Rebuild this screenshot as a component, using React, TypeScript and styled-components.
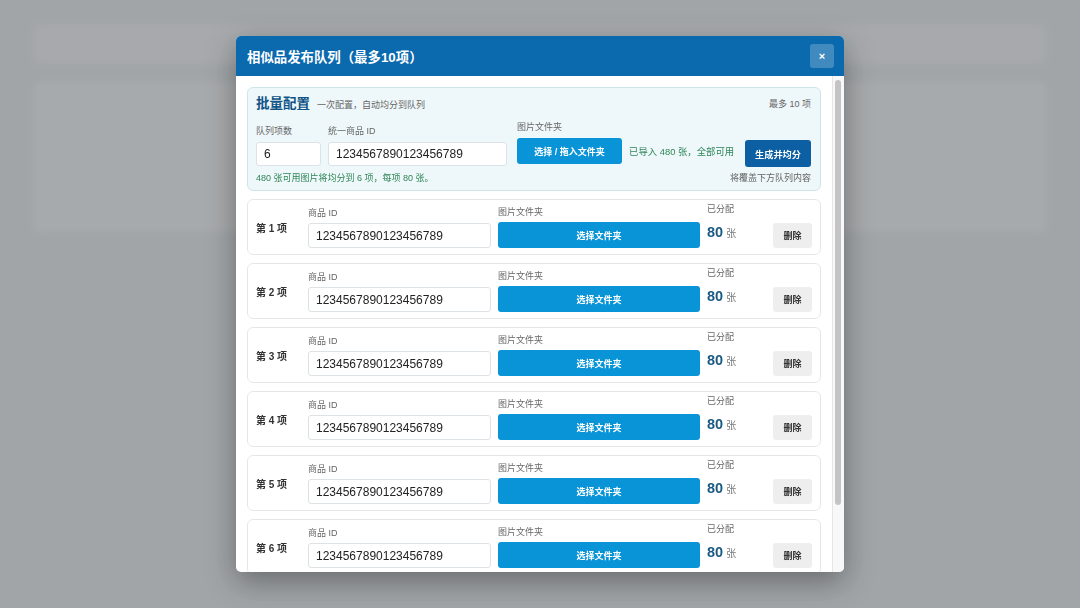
import React from "react";
import styled, { createGlobalStyle } from "styled-components";

const GlobalStyle = createGlobalStyle`
  html, body {
    margin: 0;
    padding: 0;
  }
  body {
    font-family: "Helvetica Neue", "Liberation Sans", "Noto Sans CJK SC", sans-serif;
    color: #333;
  }
  * {
    box-sizing: border-box;
  }
`;

const Page = styled.div`
  width: 1080px;
  height: 608px;
  background: #eceff1;
  padding: 24px 34px;
  position: relative;
  overflow: hidden;
`;

const TopBar = styled.div`
  height: 40px;
  border-radius: 6px;
  background: #f6f7f8;
`;

const BackPanel = styled.div`
  margin-top: 18px;
  height: 150px;
  border-radius: 6px;
  background: #f7f8f8;
`;

const Overlay = styled.div`
  position: absolute;
  inset: 0;
  background: rgba(62, 68, 72, 0.43);
  backdrop-filter: blur(3px);
  display: flex;
  align-items: center;
  justify-content: center;
`;

const Modal = styled.div`
  width: 608px;
  height: 536px;
  background: #fff;
  border-radius: 5px;
  box-shadow: 0 10px 30px rgba(0, 0, 0, 0.35);
  display: flex;
  flex-direction: column;
  overflow: hidden;
`;

const Header = styled.div`
  height: 40px;
  flex: none;
  background: #0b69ae;
  display: flex;
  align-items: center;
  justify-content: space-between;
  padding: 0 10px 0 11px;
`;

const Title = styled.h2`
  margin: 0;
  font-size: 13.4px;
  font-weight: 700;
  color: #fff;
`;

const CloseButton = styled.button`
  width: 24px;
  height: 24px;
  border: none;
  border-radius: 3px;
  background: rgba(255, 255, 255, 0.22);
  color: #fff;
  font-size: 11px;
  font-weight: 700;
  line-height: 1;
  padding: 0;
  font-family: inherit;
`;

const Body = styled.div`
  flex: 1;
  min-height: 0;
  display: flex;
`;

const Content = styled.div`
  flex: 1;
  overflow: hidden;
  padding: 11px 11px 0 11px;
  display: flex;
  flex-direction: column;
  gap: 8px;
`;

const ScrollTrack = styled.div`
  width: 12px;
  flex: none;
  background: #f8f8f8;
  border-left: 1px solid #e6e6e6;
  padding: 4px 3px 0 2px;
`;

const ScrollThumb = styled.div`
  height: 425px;
  border-radius: 3px;
  background: #c4c4c4;
`;

const BatchPanel = styled.section`
  flex: none;
  background: #eef7fa;
  border: 1px solid #cfe3ea;
  border-radius: 6px;
  padding: 8px 9px 6px 8px;
`;

const PanelHead = styled.div`
  display: flex;
  align-items: center;
  justify-content: space-between;
  height: 16px;
`;

const PanelTitle = styled.div`
  display: flex;
  align-items: baseline;
  gap: 7px;
`;

const BatchHeading = styled.span`
  font-size: 13.5px;
  line-height: 16px;
  font-weight: 700;
  color: #0f5486;
`;

const Hint = styled.span<{ $tone?: "muted" | "green" }>`
  font-size: 9px;
  line-height: 11px;
  color: ${(p) => (p.$tone === "green" ? "#2f8656" : "#666")};
  white-space: nowrap;
`;

const FieldsRow = styled.div`
  display: flex;
  align-items: flex-end;
  margin-top: 10px;
`;

const Field = styled.label<{ $w: number; $gap?: number }>`
  display: flex;
  flex-direction: column;
  width: ${(p) => p.$w}px;
  margin-right: ${(p) => p.$gap ?? 7}px;
`;

const FieldLabel = styled.span<{ $mb?: number }>`
  font-size: 9px;
  line-height: 11px;
  color: #666;
  margin-bottom: ${(p) => p.$mb ?? 5}px;
  white-space: nowrap;
`;

const TextInput = styled.input<{ $h?: number }>`
  height: ${(p) => p.$h ?? 24}px;
  width: 100%;
  border: 1px solid #dde2e6;
  border-radius: 3px;
  background: #fff;
  font-family: "Helvetica Neue", "Liberation Sans", sans-serif;
  font-size: 12px;
  color: #222;
  padding: 0 7px;
  outline: none;
`;

const FolderButton = styled.button<{ $h?: number; $mb?: number }>`
  height: ${(p) => p.$h ?? 26}px;
  width: 100%;
  margin-bottom: ${(p) => p.$mb ?? 0}px;
  border: none;
  border-radius: 3px;
  background: #0a94d8;
  color: #fff;
  font-family: inherit;
  font-size: 9px;
  font-weight: 700;
`;

const Status = styled.span`
  flex: 1;
  font-size: 9.4px;
  line-height: 11px;
  color: #2f8656;
  margin-bottom: 9px;
  white-space: nowrap;
`;

const GenerateButton = styled.button`
  width: 66px;
  height: 27px;
  margin-bottom: -1px;
  border: none;
  border-radius: 3px;
  background: #0b5fa2;
  color: #fff;
  font-family: inherit;
  font-size: 9.2px;
  font-weight: 700;
`;

const FootRow = styled.div`
  display: flex;
  justify-content: space-between;
  margin-top: 7px;
`;

const ItemRow = styled.div`
  flex: none;
  height: 56px;
  border: 1px solid #e4e7ea;
  border-radius: 6px;
  background: #fff;
  padding: 7px 8px 6px 8px;
  display: grid;
  grid-template-columns: 45px 183px 202px 1fr 39px;
  column-gap: 7px;
  align-items: end;
`;

const ItemName = styled.div`
  align-self: center;
  font-size: 10px;
  font-weight: 700;
  color: #333;
`;

const Col = styled.div`
  display: flex;
  flex-direction: column;
`;

const Alloc = styled.div`
  align-self: start;
  margin-top: -3px;
  display: flex;
  flex-direction: column;
`;

const AllocValue = styled.div`
  margin-top: 4px;
  line-height: 16px;
  display: flex;
  align-items: baseline;
  gap: 3px;
  b {
    font-size: 14.5px;
    font-weight: 700;
    color: #1b5a86;
  }
  span {
    font-size: 10px;
    color: #777;
  }
`;

const DeleteButton = styled.button`
  height: 25px;
  width: 39px;
  border: none;
  border-radius: 3px;
  background: #eeeeee;
  color: #333;
  font-family: inherit;
  font-size: 9px;
  font-weight: 700;
  padding: 0;
`;

const items = [1, 2, 3, 4, 5, 6];
const productId = "1234567890123456789";

const App = () => {
  return (
    <>
      <GlobalStyle />
      <Page>
        <TopBar />
        <BackPanel />
        <Overlay>
          <Modal>
            <Header>
              <Title>相似品发布队列（最多10项）</Title>
              <CloseButton>×</CloseButton>
            </Header>
            <Body>
              <Content>
                <BatchPanel>
                  <PanelHead>
                    <PanelTitle>
                      <BatchHeading>批量配置</BatchHeading>
                      <Hint>一次配置，自动均分到队列</Hint>
                    </PanelTitle>
                    <Hint>最多 10 项</Hint>
                  </PanelHead>
                  <FieldsRow>
                    <Field $w={65}>
                      <FieldLabel>队列项数</FieldLabel>
                      <TextInput defaultValue="6" />
                    </Field>
                    <Field $w={179} $gap={10}>
                      <FieldLabel>统一商品 ID</FieldLabel>
                      <TextInput defaultValue={productId} />
                    </Field>
                    <Field $w={105}>
                      <FieldLabel>图片文件夹</FieldLabel>
                      <FolderButton $mb={2}>选择 / 拖入文件夹</FolderButton>
                    </Field>
                    <Status>已导入 480 张，全部可用</Status>
                    <GenerateButton>生成并均分</GenerateButton>
                  </FieldsRow>
                  <FootRow>
                    <Hint $tone="green">480 张可用图片将均分到 6 项，每项 80 张。</Hint>
                    <Hint>将覆盖下方队列内容</Hint>
                  </FootRow>
                </BatchPanel>

                {items.map((n) => (
                  <ItemRow key={n}>
                    <ItemName>第 {n} 项</ItemName>
                    <Col>
                      <FieldLabel $mb={4}>商品 ID</FieldLabel>
                      <TextInput $h={25} defaultValue={productId} />
                    </Col>
                    <Col>
                      <FieldLabel $mb={4}>图片文件夹</FieldLabel>
                      <FolderButton>选择文件夹</FolderButton>
                    </Col>
                    <Alloc>
                      <FieldLabel $mb={5}>已分配</FieldLabel>
                      <AllocValue>
                        <b>80</b>
                        <span>张</span>
                      </AllocValue>
                    </Alloc>
                    <DeleteButton>删除</DeleteButton>
                  </ItemRow>
                ))}
              </Content>
              <ScrollTrack>
                <ScrollThumb />
              </ScrollTrack>
            </Body>
          </Modal>
        </Overlay>
      </Page>
    </>
  );
};

export default App;
